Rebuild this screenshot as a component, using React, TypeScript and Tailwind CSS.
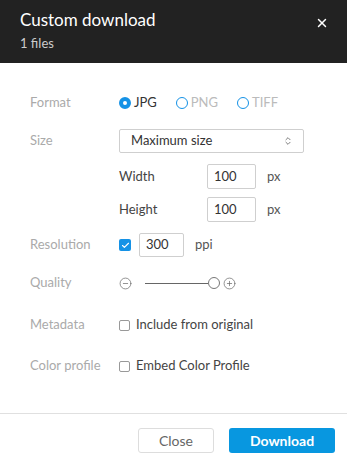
import { X, ChevronsUpDown, Check, CircleMinus, CirclePlus } from 'lucide-react';

const Label = ({ children }: { children: React.ReactNode }) => (
  <div className="w-[89px] shrink-0 text-[13px] text-[#aaaaaa]">{children}</div>
);

const Radio = ({ label, checked }: { label: string; checked?: boolean }) => (
  <label className="flex items-center gap-[3px]">
    {checked ? (
      <span className="w-[12px] h-[12px] rounded-full border-[4px] border-[#1592e6] bg-white" />
    ) : (
      <span className="w-[12px] h-[12px] rounded-full border border-[#1592e6] bg-white" />
    )}
    <span className={checked ? 'text-[#333]' : 'text-[#bbbbbb]'}>{label}</span>
  </label>
);

const Box = ({ checked }: { checked?: boolean }) =>
  checked ? (
    <span className="w-[12px] h-[12px] rounded-[2px] bg-[#1592e6] flex items-center justify-center">
      <Check size={9} strokeWidth={3} className="text-white" />
    </span>
  ) : (
    <span className="w-[11px] h-[11px] rounded-[2px] border border-[#999] bg-white" />
  );

const NumInput = ({ value, w }: { value: string; w: string }) => (
  <div className={`${w} h-full border border-[#cfcfcf] rounded-[2px] flex items-center px-[6px] text-[13px] text-[#333]`}>
    {value}
  </div>
);

export default function App() {
  return (
    <div className="w-[347px] h-[465px] bg-white flex flex-col" style={{ fontFamily: 'Lato, "Open Sans", sans-serif' }}>
      <div className="h-[63px] bg-[#222222] flex items-start justify-between pl-[20px] pr-[18px] pt-[9px]">
        <div>
          <div className="text-[17px] text-white leading-[22px]">Custom download</div>
          <div className="text-[13px] text-[#cccccc] leading-[16px] mt-[4px]">1 files</div>
        </div>
        <X size={14} strokeWidth={2.5} className="text-white mt-[7px]" />
      </div>

      <div className="flex flex-col px-[30px] pt-[30px] text-[13px] text-[#444]">
        <div className="flex items-center h-[20px]">
          <Label>Format</Label>
          <div className="flex items-center gap-[19px]">
            <Radio label="JPG" checked />
            <Radio label="PNG" />
            <Radio label="TIFF" />
          </div>
        </div>

        <div className="flex items-center h-[24px] mt-[16px]">
          <Label>Size</Label>
          <div className="w-[185px] h-full border border-[#cfcfcf] rounded-[2px] flex items-center justify-between pl-[11px] pr-[10px] text-[#333]">
            <span>Maximum size</span>
            <ChevronsUpDown size={10} className="text-[#666]" />
          </div>
        </div>

        <div className="flex items-center h-[25px] mt-[11px] pl-[89px]">
          <span className="w-[88px] text-[#444]">Width</span>
          <NumInput value="100" w="w-[49px]" />
          <span className="ml-[11px] text-[#555]">px</span>
        </div>

        <div className="flex items-center h-[25px] mt-[8px] pl-[89px]">
          <span className="w-[88px] text-[#444]">Height</span>
          <NumInput value="100" w="w-[49px]" />
          <span className="ml-[11px] text-[#555]">px</span>
        </div>

        <div className="flex items-center h-[24px] mt-[11px]">
          <Label>Resolution</Label>
          <Box checked />
          <div className="ml-[8px] h-full">
            <NumInput value="300" w="w-[45px]" />
          </div>
          <span className="ml-[11px] text-[#555]">ppi</span>
        </div>

        <div className="flex items-center h-[20px] mt-[16px]">
          <Label>Quality</Label>
          <CircleMinus size={13} strokeWidth={1.3} className="text-[#666]" />
          <div className="ml-[13px] w-[63px] h-px bg-[#666]" />
          <span className="w-[12px] h-[12px] rounded-full border border-[#777] bg-white" />
          <CirclePlus size={13} strokeWidth={1.3} className="ml-[3px] text-[#666]" />
        </div>

        <div className="flex items-center h-[20px] mt-[22px]">
          <Label>Metadata</Label>
          <Box />
          <span className="ml-[6px] text-[#444]">Include from original</span>
        </div>

        <div className="flex items-center h-[20px] mt-[21px]">
          <Label>Color profile</Label>
          <Box />
          <span className="ml-[6px] text-[#444]">Embed Color Profile</span>
        </div>
      </div>

      <div className="mt-[37px] h-px bg-[#e0e0e0]" />

      <div className="flex justify-end gap-[15px] pr-[12px] pt-[14px]">
        <button className="w-[76px] h-[25px] border border-[#dddddd] rounded-[3px] text-[14px] text-[#666]">Close</button>
        <button className="w-[106px] h-[25px] rounded-[3px] bg-[#0897e0] text-[14px] font-bold text-white">Download</button>
      </div>
    </div>
  );
}
